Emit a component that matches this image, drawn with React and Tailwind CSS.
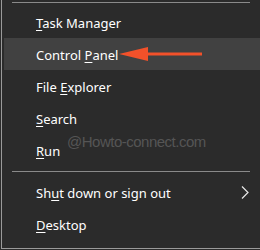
const items = [
  { pre: '', key: 'T', post: 'ask Manager' },
  { pre: 'Control ', key: 'P', post: 'anel', active: true },
  { pre: 'File ', key: 'E', post: 'xplorer' },
  { pre: '', key: 'S', post: 'earch' },
  { pre: '', key: 'R', post: 'un' },
];

const bottom = [
  { pre: 'Sh', key: 'u', post: 't down or sign out', sub: true },
  { pre: '', key: 'D', post: 'esktop' },
];

function Row({ item }) {
  return (
    <div className={`relative flex items-center h-[32px] pl-[32px] pr-3 ${item.active ? 'bg-[#414141]' : ''}`}>
      <span className="pt-[3px]">
        {item.pre}
        <u className="underline-offset-2">{item.key}</u>
        {item.post}
      </span>
      {item.active && (
        <svg className="absolute left-[111px] top-[8px]" width="90" height="16" viewBox="0 0 90 16">
          <polygon points="4,8 33,1 33,15" fill="#f2512a" />
          <rect x="30" y="6.5" width="57" height="3" fill="#f2512a" />
        </svg>
      )}
      {item.sub && (
        <svg className="absolute right-[11px] top-[10px]" width="8" height="13" viewBox="0 0 8 13">
          <path d="M1 0.5 L7 6.5 L1 12.5" fill="none" stroke="#e8e8e8" strokeWidth="1.2" />
        </svg>
      )}
    </div>
  );
}

export default function App() {
  return (
    <div className="w-[260px] h-[250px] bg-[#2b2b2b] pl-px" style={{ fontFamily: '"Noto Sans", "Open Sans", sans-serif' }}>
      <div className="relative h-[249px] border-l border-b border-[#9a9a9a] pl-[2px] text-[13px] text-white">
        <div className="h-[2px]" />
        <div className="h-px bg-[#8a8a8a] ml-[8px] mr-[10px]" />
        <div className="h-[3px]" />
        {items.map((it) => (
          <Row key={it.key} item={it} />
        ))}
        <div className="h-[5px]" />
        <div className="h-px bg-[#8a8a8a] ml-[8px] mr-[10px]" />
        <div className="h-[4px]" />
        {bottom.map((it) => (
          <Row key={it.key} item={it} />
        ))}
        <div
          className="absolute left-[65px] top-[131px] text-[15px] tracking-[-0.5px] text-[#555555]"
          style={{ fontFamily: '"Liberation Sans", Arial, sans-serif' }}
        >
          @Howto-connect.com
        </div>
      </div>
    </div>
  );
}
